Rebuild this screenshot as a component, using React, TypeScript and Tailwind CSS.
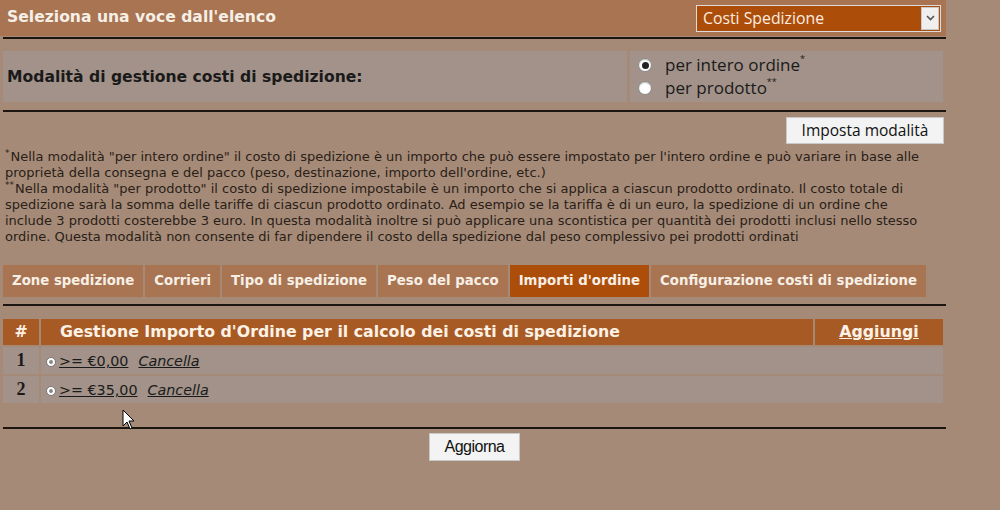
import React from "react";

const tabs = [
  "Zone spedizione",
  "Corrieri",
  "Tipo di spedizione",
  "Peso del pacco",
  "Importi d'ordine",
  "Configurazione costi di spedizione",
];

const rows = [
  { n: 1, value: ">= €0,00" },
  { n: 2, value: ">= €35,00" },
];

function Radio({ checked }: { checked?: boolean }) {
  return (
    <span className="flex size-[14px] shrink-0 items-center justify-center rounded-full border border-[#8a8a8a] bg-white shadow-[inset_0_1px_1px_rgba(0,0,0,0.25)]">
      {checked && <span className="size-[7px] rounded-full bg-[#222]" />}
    </span>
  );
}

function Rule({ className = "" }: { className?: string }) {
  return <div className={`h-[2px] w-[943px] bg-[#1c1510] ${className}`} />;
}

function Star({ children }: { children: string }) {
  return <span className="mr-[1px] inline-block align-top text-[9px] leading-[9px]">{children}</span>;
}

export default function App() {
  return (
    <div className="relative h-[510px] w-[1000px] overflow-hidden bg-[#a58b77] font-['DejaVu_Sans',sans-serif] text-[#1a1a1a]">
      <div className="w-[946px]">
        {/* top selector bar */}
        <div className="flex h-[36px] items-center justify-between bg-[#a87452] pl-[7px] pr-[5px]">
          <span className="text-[15.6px] font-bold text-[#f6efe6]">Seleziona una voce dall'elenco</span>
          <div className="flex h-[27px] w-[245px] items-stretch border border-[#dcdcdc] bg-[#ad4d0a]">
            <span className="flex-1 pl-[6px] font-['Open_Sans',sans-serif] text-[15.8px] leading-[25px] text-[#fbeee0]">
              Costi Spedizione
            </span>
            <span className="m-[1px] flex w-[18px] items-center justify-center border border-[#c8c8c8] bg-[#efefef]">
              <svg width="9" height="6" viewBox="0 0 9 6">
                <path d="M1 1 L4.5 4.5 L8 1" fill="none" stroke="#555" strokeWidth="1.6" />
              </svg>
            </span>
          </div>
        </div>
        <Rule className="mt-[1px] ml-[3px]" />

        {/* mode box */}
        <div className="mt-[12px] ml-[3px] flex h-[51px] w-[940px] gap-[3px]">
          <div className="flex w-[624px] items-center bg-[#a29289] pl-[4px] pt-[2px]">
            <span className="text-[15.6px] font-bold">Modalità di gestione costi di spedizione:</span>
          </div>
          <div className="flex flex-1 flex-col justify-center gap-[1px] bg-[#a29289] pl-[8px] font-['Open_Sans',sans-serif] text-[17px] leading-[22px]">
            <label className="flex items-center gap-[13px]">
              <Radio checked />
              <span>
                per intero ordine<Star>*</Star>
              </span>
            </label>
            <label className="flex items-center gap-[13px]">
              <Radio />
              <span>
                per prodotto<Star>**</Star>
              </span>
            </label>
          </div>
        </div>
        <Rule className="mt-[8px] ml-[3px]" />

        <div className="mt-[5px] flex justify-end pr-[2px]">
          <button className="h-[27px] w-[158px] border border-[#c9c9c9] bg-[#f3f3f3] font-['Open_Sans',sans-serif] text-[15.5px] text-[#111]">
            Imposta modalità
          </button>
        </div>

        {/* notes */}
        <div className="mt-[5px] whitespace-nowrap pl-[5px] text-[13px] leading-[16px] text-[#2a2018]">
          <p>
            <Star>*</Star>Nella modalità "per intero ordine" il costo di spedizione è un importo che può essere impostato per l'intero ordine e può variare in base alle
            <br />
            proprietà della consegna e del pacco (peso, destinazione, importo dell'ordine, etc.)
          </p>
          <p>
            <Star>**</Star>Nella modalità "per prodotto" il costo di spedizione impostabile è un importo che si applica a ciascun prodotto ordinato. Il costo totale di
            <br />
            spedizione sarà la somma delle tariffe di ciascun prodotto ordinato. Ad esempio se la tariffa è di un euro, la spedizione di un ordine che
            <br />
            include 3 prodotti costerebbe 3 euro. In questa modalità inoltre si può applicare una scontistica per quantità dei prodotti inclusi nello stesso
            <br />
            ordine. Questa modalità non consente di far dipendere il costo della spedizione dal peso complessivo pei prodotti ordinati
          </p>
        </div>

        {/* tabs */}
        <div className="mt-[20px] ml-[3px] flex gap-[2px]">
          {tabs.map((t) => (
            <div
              key={t}
              className={`flex h-[32px] items-center px-[9px] text-[13.3px] font-bold text-[#f7efe5] ${
                t === "Importi d'ordine" ? "bg-[#ad4d0a]" : "bg-[#a87452]"
              }`}
            >
              {t}
            </div>
          ))}
        </div>
        <Rule className="mt-[7px] ml-[3px]" />

        {/* table */}
        <div className="mt-[13px] ml-[3px] w-[940px]">
          <div className="flex h-[26px] gap-[2px] text-[15.8px] font-bold text-[#fbf1e4]">
            <div className="flex w-[36px] items-center justify-center bg-[#a85a25]">#</div>
            <div className="flex flex-1 items-center bg-[#a85a25] pl-[19px]">
              Gestione Importo d'Ordine per il calcolo dei costi di spedizione
            </div>
            <div className="flex w-[128px] items-center justify-center bg-[#a85a25]">
              <a className="underline">Aggiungi</a>
            </div>
          </div>
          {rows.map((r) => (
            <div key={r.n} className="mt-[2px] flex h-[27px] gap-[2px]">
              <div className="flex w-[36px] items-center justify-center bg-[#a29289] font-['Liberation_Serif',serif] text-[18px] font-bold">
                {r.n}
              </div>
              <div className="flex flex-1 items-center gap-[3px] bg-[#a29289] pl-[5px] pt-[2px] text-[14.3px]">
                <span className="flex size-[10px] items-center justify-center rounded-full border border-[#777] bg-white">
                  <span className="size-[4px] rounded-full bg-[#888]" />
                </span>
                <a className="underline">{r.value}</a>
                <a className="ml-[7px] italic underline">Cancella</a>
              </div>
            </div>
          ))}
        </div>

        <Rule className="mt-[24px] ml-[3px]" />
        <div className="mt-[4px] flex justify-center pl-[3px]">
          <button className="h-[28px] w-[91px] border border-[#c9c9c9] bg-[#f3f3f3] font-['Liberation_Sans',sans-serif] text-[16px] tracking-[-0.5px] text-[#111]">
            Aggiorna
          </button>
        </div>
      </div>

      {/* mouse pointer */}
      <svg className="absolute left-[122px] top-[409px]" width="14" height="22" viewBox="0 0 14 22">
        <path d="M1 1 L1 17 L5 13 L8 20 L10 19 L7 12 L12 12 Z" fill="#fff" stroke="#000" strokeWidth="1" />
      </svg>
    </div>
  );
}
